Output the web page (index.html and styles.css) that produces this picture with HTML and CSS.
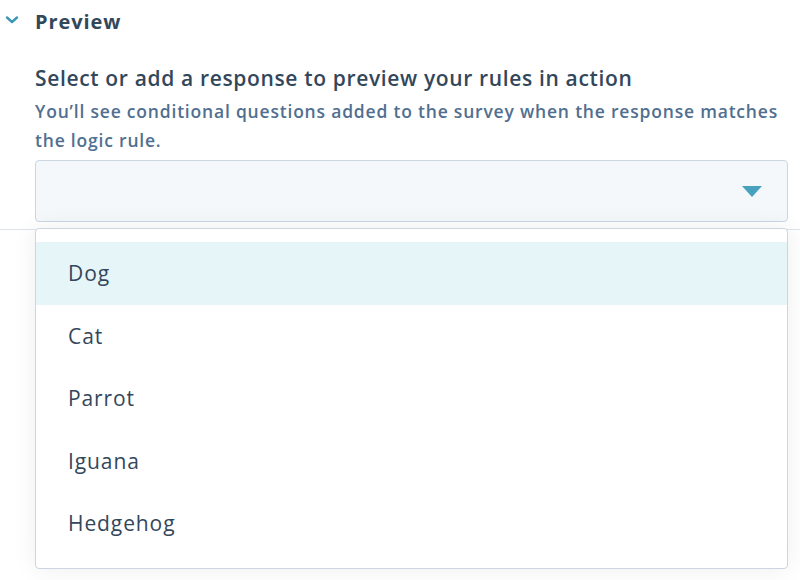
FILE: index.html
```html
<!DOCTYPE html>
<html>
<head>
<meta charset="utf-8">
<link rel="stylesheet" href="styles.css">
</head>
<body>
<div class="page">
  <div class="header">
    <svg class="chev" width="14" height="10" viewBox="0 0 14 10"><path d="M2 2.5 L7 7 L12 2.5" fill="none" stroke="#3b97b3" stroke-width="2.4" stroke-linecap="round" stroke-linejoin="round"/></svg>
    <span class="title">Preview</span>
  </div>
  <div class="content">
    <div class="label">Select or add a response to preview your rules in action</div>
    <div class="help">You’ll see conditional questions added to the survey when the response matches the logic rule.</div>
    <div class="select">
      <svg class="caret" width="20" height="11" viewBox="0 0 20 11"><path d="M0 0 H20 L10 11 Z" fill="#48a1bd"/></svg>
    </div>
  </div>
  <div class="divider-row">
    <div class="menu">
      <div class="opt active">Dog</div>
      <div class="opt">Cat</div>
      <div class="opt">Parrot</div>
      <div class="opt">Iguana</div>
      <div class="opt">Hedgehog</div>
    </div>
  </div>
</div>
</body>
</html>
```
FILE: styles.css
```css
* { box-sizing: border-box; }
html, body { margin: 0; padding: 0; background: #fff; }
body { font-family: "Open Sans", Lato, sans-serif; color: #33475b; width: 800px; height: 580px; overflow: hidden; }
.page { position: relative; height: 580px; }
.header { display: flex; align-items: center; height: 42px; padding-left: 5px; }
.chev { margin-right: 16px; margin-top: -2px; }
.title { font-size: 20px; font-weight: 700; color: #33475b; letter-spacing: 0.9px; }
.content { padding: 22px 12px 0 35px; }
.label { font-size: 21px; font-weight: 600; line-height: 28px; color: #33475b; letter-spacing: 0.65px; }
.help { font-size: 17.5px; font-weight: 600; line-height: 29px; color: #516f90; margin-top: 5px; letter-spacing: 0.8px; }
.select { margin-top: 5px; height: 62px; background: #f5f8fa; border: 1.5px solid #cbd6e2; border-radius: 4px; display: flex; align-items: center; justify-content: flex-end; padding-right: 25px; }
.caret { margin-top: 1px; }
.divider-row { margin-top: 7px; border-top: 1.5px solid #dfe3eb; position: relative; height: 345px; }
.menu { position: absolute; left: 35px; top: -2px; width: 753px; height: 341px; background: #fff; border: 1.5px solid #cbd6e2; border-radius: 4px; padding-top: 13px; box-shadow: 0 0 24px rgba(0,0,0,0.07); }
.opt { height: 62.5px; display: flex; align-items: center; padding-left: 32px; font-size: 21px; letter-spacing: 0.9px; color: #33475b; }
.opt.active { background: #e5f5f8; }
```
